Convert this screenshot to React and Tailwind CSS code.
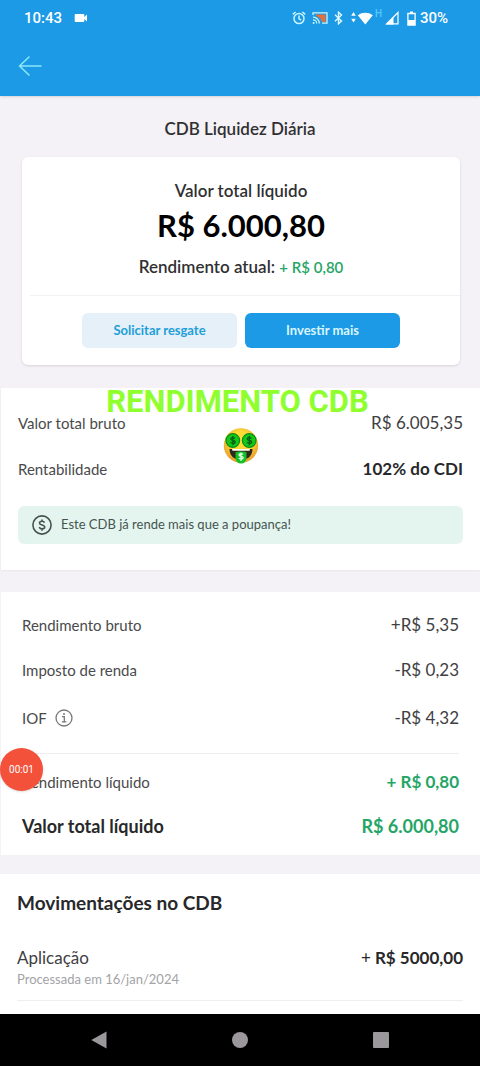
import clsx from 'clsx'

const taxes = [
    { label: 'Rendimento bruto', value: '+R$ 5,35', space: '' },
    { label: 'Imposto de renda', value: '-R$ 0,23', space: 'mt-[15px]' },
    { label: 'IOF', value: '-R$ 4,32', space: 'mt-[18px]', info: true },
]

function StatusBar() {
    return (
        <div className="flex h-9 items-center justify-between pl-6 pr-8 font-['Roboto'] text-white">
            <div className="flex items-center gap-3">
                <span className="text-[15px] font-medium">10:43</span>
                <svg width="14" height="10" viewBox="0 0 14 10" fill="currentColor">
                    <path d="M1.500 1h8a.8.8 0 0 1 .8.8V4L13 1.500v7L10.300 6v2.200a.8.8 0 0 1-.8.8h-8a.8.8 0 0 1-.8-.8V1.800a.8.8 0 0 1 .8-.8z" />
                </svg>
            </div>
            <div className="flex items-center">
                <svg width="14" height="14" viewBox="0 0 14 14" fill="none" stroke="#c9f5ff" strokeWidth="1.500">
                    <circle cx="7" cy="7.600" r="5" />
                    <path d="M7 4.600v3.200l2.200 1.300M.8 3.400 3.600 1M13.200 3.400 10.400 1" />
                </svg>
                <svg className="ml-1.5" width="16" height="14" viewBox="0 0 16 14" fill="none" stroke="#c9f5ff" strokeWidth="1.300">
                    <path d="M4 3.500h9.500v7.500H10L8.500 7.500 4 4.800z" fill="#e0703f" stroke="none" />
                    <path d="M1 4V1.800h14v10.400H10" />
                    <path d="M1 6.200a6.300 6.300 0 0 1 6.300 6.300M1 8.800a3.700 3.700 0 0 1 3.700 3.700" />
                    <circle cx="1.600" cy="12" r="1" fill="#c9f5ff" stroke="none" />
                </svg>
                <svg className="ml-1.5" width="9" height="14" viewBox="0 0 9 14" fill="none" stroke="#dff9ff" strokeWidth="1.400">
                    <path d="M1 3.800 7.500 10 4.500 12.800V1.200L7.500 4 1 10.200" />
                </svg>
                <svg className="ml-2" width="22" height="14" viewBox="0 0 22 14" fill="currentColor">
                    <path d="M2.500 1 4.800 4.800H.2zM2.500 11.500.2 7.700h4.600z" />
                    <path d="M6.800 4.300C11 1 17.500 1 21.800 4.300L14.300 13.400z" />
                </svg>
                <span className="-mt-2 ml-0.5 w-2 text-[10px] font-medium leading-none text-[#55c8fa]">H</span>
                <svg className="ml-0.5" width="14" height="14" viewBox="0 0 14 14" fill="none" stroke="currentColor" strokeWidth="1.200">
                    <path d="M1.600 12.900 13 1.500v11.400z" />
                    <path d="M1 13.400 8.500 6v7.400z" fill="currentColor" stroke="none" />
                </svg>
                <svg className="ml-2" width="9" height="15" viewBox="0 0 9 15" fill="none" stroke="currentColor" strokeWidth="1.300">
                    <path d="M.9 2.500h7.200v11.600H.9z" />
                    <path d="M3 .4h3v2H3zM1 9h7v5H1z" fill="currentColor" stroke="none" />
                </svg>
                <span className="ml-1 text-[15px] font-medium">30%</span>
            </div>
        </div>
    )
}

function MoneyFace() {
    return (
        <svg width="36" height="36" viewBox="0 0 36 36">
            <defs>
                <radialGradient id="face" cx="50%" cy="40%" r="60%">
                    <stop offset="0.5" stopColor="#fddb35" />
                    <stop offset="1" stopColor="#e59a2e" />
                </radialGradient>
            </defs>
            <circle cx="18" cy="17.500" r="17.200" fill="url(#face)" />
            <path d="M6.500 21h23c0 7-5 11-11.500 11S6.500 28 6.500 21z" fill="#33261b" />
            <path d="M9 21h18l-.5 1.800h-17z" fill="#fff" />
            <path d="M12.500 24.500c0-1.500 11-1.500 11 0v5.500a5.500 5.500 0 0 1-11 0z" fill="#0fc226" />
            <g fill="#12c916" stroke="#0b8a1c" strokeWidth="1.200">
                <circle cx="9.800" cy="12.500" r="6.800" />
                <circle cx="26.200" cy="12.500" r="6.800" />
            </g>
            <g fill="none" stroke="#0a5a17" strokeWidth="1.300">
                <path d="M12 10.500c-.6-1-4.200-1.300-4.200.6s4.400.9 4.400 2.900-3.900 1.600-4.600.3M9.900 8v9.300" />
                <path d="M28.400 10.500c-.6-1-4.200-1.300-4.200.6s4.400.9 4.400 2.900-3.900 1.600-4.600.3M26.300 8v9.300" />
            </g>
            <path d="M20 26.500c-.6-1-4-1.200-4 .5s4.200.9 4.200 2.700-3.700 1.500-4.400.3M18 24.600v8.400" fill="none" stroke="#eaffea" strokeWidth="1.300" />
        </svg>
    )
}

function CoinIcon() {
    return (
        <svg width="20" height="20" viewBox="0 0 20 20" fill="none" stroke="currentColor" strokeWidth="1.600">
            <circle cx="10" cy="10" r="9.100" />
            <path d="M12.600 7.700c-.5-1-1.400-1.500-2.600-1.500-1.400 0-2.500.7-2.500 1.800 0 2.600 5.200 1.300 5.200 4 0 1.200-1.100 1.900-2.600 1.900-1.400 0-2.400-.6-2.900-1.700M10 4.400v1.800M10 13.900v1.800" />
        </svg>
    )
}

function Row({ label, value, className, labelClass = 'text-[15px] text-[#4a4a4c]', valueClass = 'text-[17px] text-[#404042]', children }) {
    return (
        <div className={clsx('flex h-[30px] items-center justify-between', className)}>
            <span className={clsx('flex items-center gap-2', labelClass)}>{label}{children}</span>
            <span className={valueClass}>{value}</span>
        </div>
    )
}

function App() {
    return (
        <div className="relative flex min-h-screen flex-col bg-[#f4f2f6] font-['Lato',sans-serif] text-[#303032]">
            <header className="h-24 bg-[#1c9ae6] shadow-sm">
                <StatusBar />
                <button aria-label="Voltar" className="ml-[18px] mt-5 block text-[#8be6fb]">
                    <svg width="24" height="20" viewBox="0 0 24 20" fill="none" stroke="currentColor" strokeWidth="1.600" strokeLinecap="round" strokeLinejoin="round">
                        <path d="M23 10H1.500M11 1 1.500 10l9.500 9" />
                    </svg>
                </button>
            </header>

            <main className="flex-1">
                <h1 className="pt-5 text-center text-[17px] font-semibold leading-[26px]">CDB Liquidez Diária</h1>

                <section className="ml-[22px] mr-5 mt-[15px] rounded-md bg-white pb-[17px] pt-5 text-center shadow-sm">
                    <h2 className="text-[17px] font-semibold leading-7">Valor total líquido</h2>
                    <p className="text-[31px] font-bold leading-10 text-black">R$ 6.000,80</p>
                    <p className="mt-2 text-[17px] font-semibold leading-7">
                        Rendimento atual: <span className="text-[15px] text-[#25a566]">+ R$ 0,80</span>
                    </p>
                    <hr className="ml-2 mt-3.5 border-[#f3f1f5]" />
                    <div className="mx-auto mt-[17px] flex max-w-[318px] gap-2">
                        <button className="h-[35px] flex-1 rounded-md bg-[#e5f0f8] text-[13px] font-bold text-[#1f9fd8]">Solicitar resgate</button>
                        <button className="h-[35px] flex-1 rounded-md bg-[#1c9ae6] text-[13px] font-bold text-[#d8f6ff]">Investir mais</button>
                    </div>
                </section>

                <section className="relative ml-px mt-[23px] bg-white px-[17px] pb-[26px] pt-5 shadow-xs">
                    <Row label="Valor total bruto" value="R$ 6.005,35" />
                    <Row label="Rentabilidade" value="102% do CDI" className="mt-4" valueClass="text-[17px] font-bold text-[#28282a]" />
                    <div className="mt-[22px] flex h-[38px] items-center gap-[9px] rounded-md bg-[#e4f5ef] pl-3.5 text-[#46544f]">
                        <CoinIcon />
                        <span className="text-[13px]">Este CDB já rende mais que a poupança!</span>
                    </div>

                    {/* video caption */}
                    <div className="absolute inset-x-0 top-0 flex flex-col items-center">
                        <p className="pr-1.5 font-['Roboto'] text-[31px] font-bold leading-7 text-[#8fff2e]">RENDIMENTO CDB</p>
                        <div className="mt-3">
                            <MoneyFace />
                        </div>
                    </div>
                </section>

                <section className="ml-px mt-[22px] bg-white px-[21px] pb-3.5 pt-[18px]">
                    {taxes.map(t => (
                        <Row key={t.label} label={t.label} value={t.value} className={t.space}>
                            {t.info && (
                                <button aria-label="Sobre o IOF" className="text-[#77777a]">
                                    <svg width="18" height="18" viewBox="0 0 18 18" fill="none" stroke="currentColor" strokeWidth="1.300">
                                        <circle cx="9" cy="9" r="8" />
                                        <path d="M7 7.700h2.300v5M6.800 12.900h4.600" />
                                        <circle cx="9" cy="5" r="1" fill="currentColor" stroke="none" />
                                    </svg>
                                </button>
                            )}
                        </Row>
                    ))}
                    <hr className="mt-5 border-[#efedf0]" />
                    <Row label="Rendimento líquido" value="+ R$ 0,80" className="mt-[13px]" valueClass="text-[17px] font-bold text-[#25a566]" />
                    <Row
                        label="Valor total líquido"
                        value="R$ 6.000,80"
                        className="mt-3.5"
                        labelClass="text-lg font-bold text-[#28282a]"
                        valueClass="text-lg font-bold text-[#25a566]"
                    />
                </section>

                <section className="mt-[19px] bg-white px-[17px] pb-[13px] pt-3.5">
                    <h2 className="text-[19px] font-bold leading-[30px] text-[#28282a]">Movimentações no CDB</h2>
                    <div className="mt-7 flex justify-between">
                        <div>
                            <p className="text-[17px] leading-6 text-[#404042]">Aplicação</p>
                            <p className="text-[13px] leading-[18px] text-[#a3a3a6]">Processada em 16/jan/2024</p>
                        </div>
                        <p className="text-[17px] font-bold leading-6 text-[#28282a]"><span className="font-normal">+</span> R$ 5000,00</p>
                    </div>
                    <hr className="mt-3 border-[#efedf0]" />
                </section>
            </main>

            {/* screen recorder bubble */}
            <div className="absolute left-0 top-[748px] flex size-[43px] items-center justify-center rounded-full bg-[#f4513b] font-['Roboto'] text-[10px] text-white shadow">00:01</div>

            <nav className="flex h-[52px] items-center justify-between bg-black px-[19%] text-[#9b989c]">
                <button aria-label="Voltar">
                    <svg width="16" height="18" viewBox="0 0 16 18" fill="currentColor"><path d="M15.500.5v17L.3 9z" /></svg>
                </button>
                <button aria-label="Início" className="size-4 rounded-full bg-current"></button>
                <button aria-label="Recentes" className="size-4 rounded-[1px] bg-current"></button>
            </nav>
        </div>
    )
}

export default App
